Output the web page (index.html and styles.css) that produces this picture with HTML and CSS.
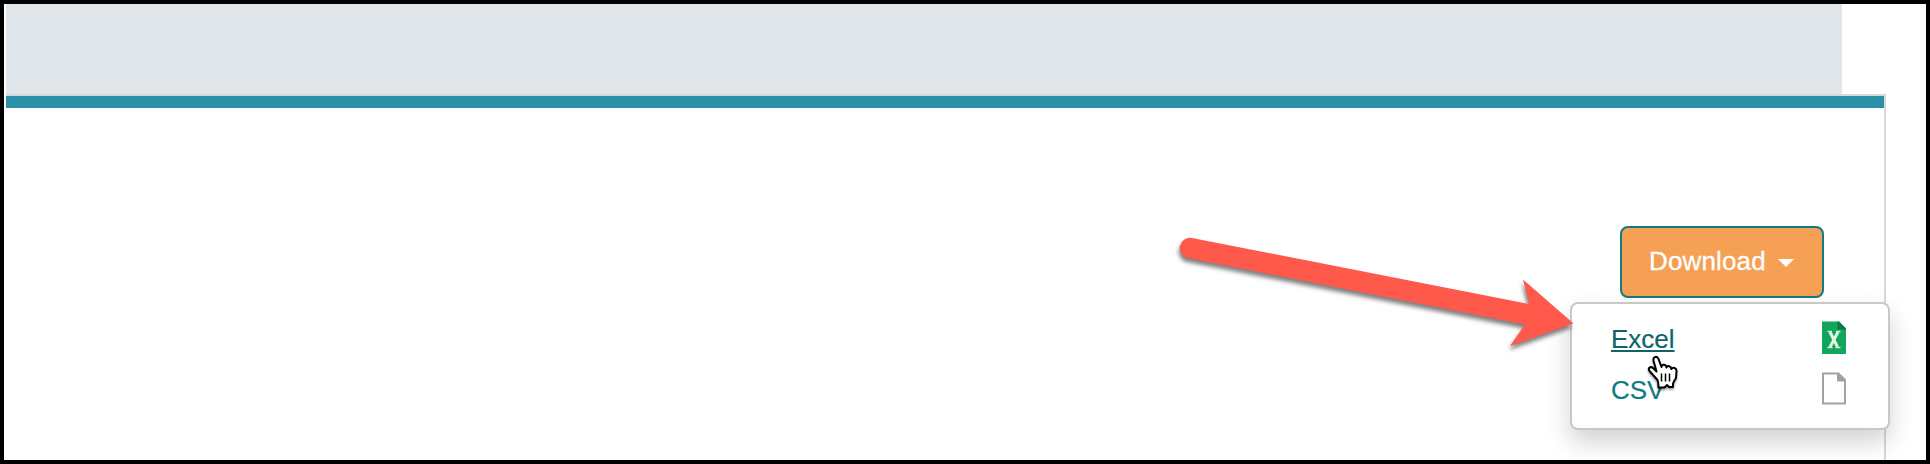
FILE: index.html
```html
<!DOCTYPE html>
<html lang="en">

<head>
    <meta charset="UTF-8">
    <meta name="viewport" content="width=device-width, initial-scale=1.0">
    <title>Download</title>
    <link rel="stylesheet" href="styles.css">
</head>

<body>
    <div class="page">
        <header class="banner"></header>
        <section class="panel">
            <div class="dropdown">
                <button type="button" class="btn">Download <span class="caret"></span></button>
                <ul class="menu">
                    <li>
                        <a href="#" class="active">Excel</a>
                        <svg class="file-icon" width="24" height="33" viewBox="0 0 24 33">
                            <path d="M0 .5H17L24 7.500V33H0Z" fill="#12a55c" />
                            <path d="M15.500 .5H17L24 7.500V8.500H15.500Z" fill="#0b7a43" />
                            <path d="M8 11L15.500 26M16 11L8 26" stroke="#e2f5e6" stroke-width="3" />
                            <path d="M5.500 10.500H10M14 10.500H18.500M5.500 26.500H10.500M13.500 26.500H18.500" stroke="#d5efdc" stroke-width="1.400" />
                        </svg>
                    </li>
                    <li>
                        <a href="#">CSV</a>
                        <svg class="file-icon" width="24" height="33" viewBox="0 0 24 33">
                            <path d="M1 1.500H16.500L23 8V31.500H1Z" fill="#fff" stroke="#a3a3a3" stroke-width="2" />
                            <path d="M15.500 1L24 9H15.500Z" fill="#a0a0a0" stroke="#a3a3a3" />
                        </svg>
                    </li>
                </ul>
            </div>
        </section>

        <svg class="arrow" width="430" height="130" viewBox="1160 230 430 130">
            <path d="M1192 238L1529 304L1523 279.500L1573.500 323.500L1510 346L1525 324.500L1188 258A10 10 0 0 1 1192 238Z" fill="#ff594c" />
        </svg>
        <svg class="cursor" width="34" height="38" viewBox="0 0 34 38">
            <path d="M11.500 25L3.500 16C1.500 13 4.500 11 7 13L10.500 16.500L7.500 5.500C6.800 1.500 11.200 .500 12.500 4L15.500 12C16 9 20 9 20.500 12.500C21.500 10 25 11 25.300 14C27 12 30.800 12.500 30.500 16.500L30 22.500C29.500 25 27 26.500 27 29V32H23L21 30L18.500 32.500H12.500C12.500 29.500 12.500 27.500 11.500 25Z" fill="#fff" stroke="#000" stroke-width="2" stroke-linejoin="round" />
            <path d="M15.500 18.500V26.500M19.500 18.500V26.500M23.500 18.500V26.500" stroke="#000" stroke-width="1.500" />
        </svg>
    </div>
</body>

</html>
```
FILE: styles.css
```css
* {
    box-sizing: border-box;
}

body {
    margin: 0;
    font-family: "Liberation Sans", Arial, sans-serif;
    font-size: 26px;
}

.page {
    position: relative;
    height: 464px;
    padding-left: 2px;
    border: 4px solid #000;
    background-color: #fff;
    overflow: hidden;
}

.banner {
    width: 1836px;
    height: 90px;
    background-color: #e1e6ea;
}

.panel {
    display: flex;
    justify-content: flex-end;
    width: 1880px;
    height: 366px;
    padding: 118px 60px 0 0;
    border-top: 2px solid #d8dbdc;
    border-right: 2px solid #d8d8d8;
    background: linear-gradient(#2a91a6, #2a91a6) no-repeat top / 100% 12px;
}

.dropdown {
    position: relative;
    width: 204px;
    height: 72px;
    margin-top: 12px;
}

.btn {
    display: flex;
    align-items: center;
    width: 100%;
    height: 100%;
    padding: 0 0 2px 27px;
    border: 2px solid #137b80;
    border-radius: 8px;
    background-color: #f5a055;
    color: #fff;
    font: inherit;
    letter-spacing: 0.15px;
    -webkit-text-stroke: 0.3px;
}

.caret {
    margin: 4px 0 0 12px;
    border: 8px solid transparent;
    border-top-color: #fff;
    border-bottom: 0;
}

.menu {
    position: absolute;
    top: 76px;
    right: -66px;
    width: 320px;
    height: 128px;
    margin: 0;
    padding: 9px 42px 0 39px;
    border: 2px solid #c8c8c8;
    border-radius: 8px;
    background-color: #fff;
    box-shadow: 0 12px 24px rgba(0, 0, 0, 0.18);
    list-style: none;
}

.menu li {
    display: flex;
    align-items: center;
    justify-content: space-between;
    height: 51px;
}

.menu a {
    color: #0f7c82;
    line-height: 30px;
    text-decoration: none;
    -webkit-text-stroke: 0.2px;
}

.menu .active {
    color: #0d656b;
    text-decoration: underline;
    text-decoration-thickness: 2px;
    text-underline-offset: 2px;
}

.file-icon {
    margin-bottom: 3px;
}

/* pointer drawings sit over the menu */
.arrow {
    position: absolute;
    left: 1156px;
    top: 226px;
    filter: drop-shadow(-1px 4px 2px rgba(0, 0, 0, 0.5));
}

.cursor {
    position: absolute;
    left: 1642px;
    top: 351px;
    filter: drop-shadow(0 2px 1px rgba(0, 0, 0, 0.35));
}
```
